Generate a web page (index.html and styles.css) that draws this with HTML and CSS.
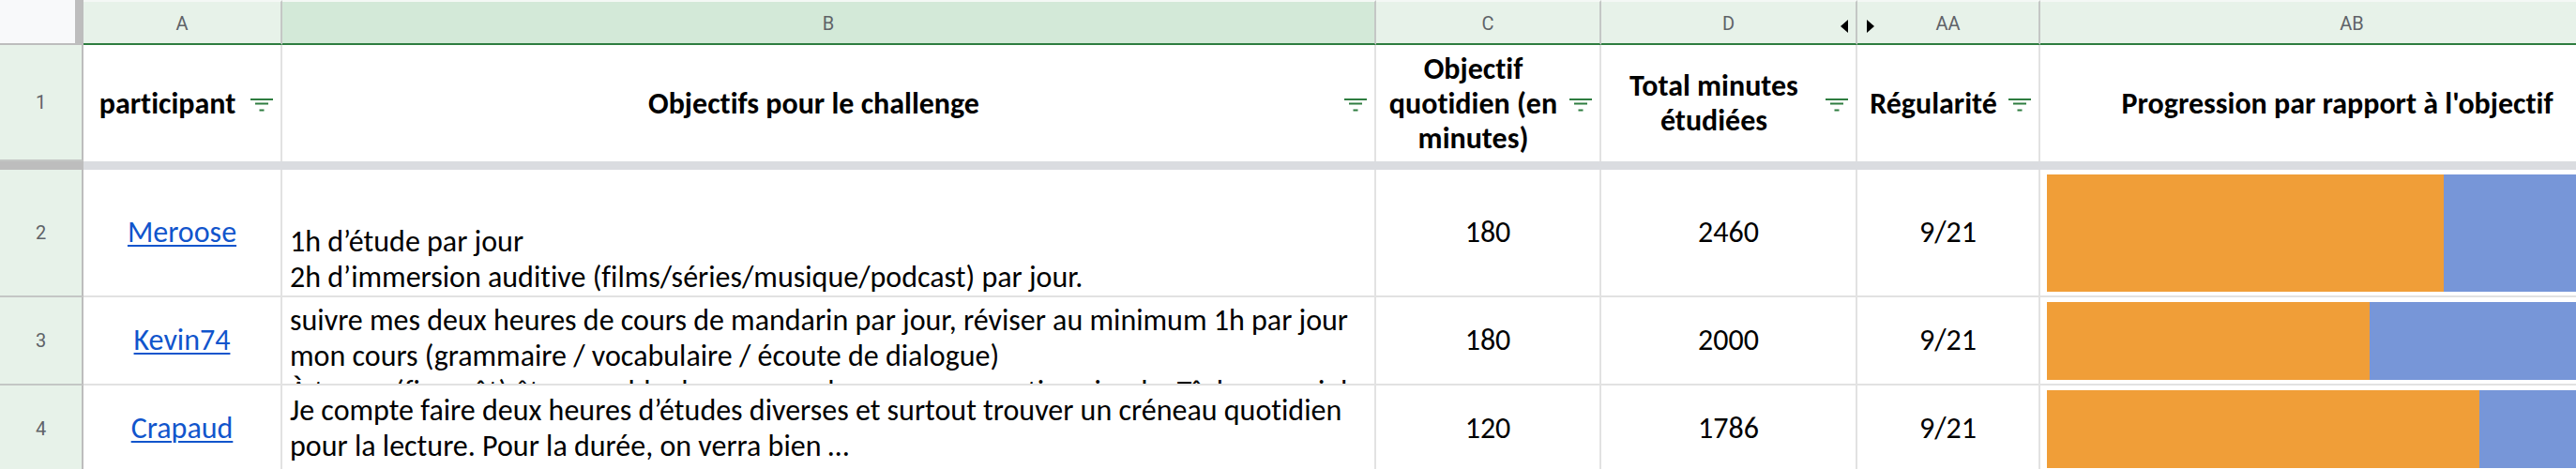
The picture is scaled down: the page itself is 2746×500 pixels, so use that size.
FILE: index.html
```html
<!DOCTYPE html>
<html lang="fr">
<head>
<meta charset="utf-8">
<title>Challenge</title>
<link rel="stylesheet" href="styles.css">
</head>
<body>
<div class="sheet">
  <!-- column header row -->
  <div class="corner"></div>
  <div class="colhead">A</div>
  <div class="colhead sel">B</div>
  <div class="colhead">C</div>
  <div class="colhead has-tri">D<span class="tri tri-left"></span></div>
  <div class="colhead has-tri">AA<span class="tri tri-right"></span></div>
  <div class="colhead">AB</div>

  <!-- row 1 -->
  <div class="rowhead">1</div>
  <div class="hcell"><div class="htext">participant</div><svg class="filter" viewBox="0 0 24 14"><rect x="0" y="0" width="24" height="2"/><rect x="5" y="4.5" width="14" height="2"/><rect x="9.5" y="11.5" width="5" height="2"/></svg></div>
  <div class="hcell"><div class="htext">Objectifs pour le challenge</div><svg class="filter" viewBox="0 0 24 14"><rect x="0" y="0" width="24" height="2"/><rect x="5" y="4.5" width="14" height="2"/><rect x="9.5" y="11.5" width="5" height="2"/></svg></div>
  <div class="hcell"><div class="htext">Objectif quotidien (en minutes)</div><svg class="filter" viewBox="0 0 24 14"><rect x="0" y="0" width="24" height="2"/><rect x="5" y="4.5" width="14" height="2"/><rect x="9.5" y="11.5" width="5" height="2"/></svg></div>
  <div class="hcell"><div class="htext">Total minutes étudiées</div><svg class="filter" viewBox="0 0 24 14"><rect x="0" y="0" width="24" height="2"/><rect x="5" y="4.5" width="14" height="2"/><rect x="9.5" y="11.5" width="5" height="2"/></svg></div>
  <div class="hcell"><div class="htext">Régularité</div><svg class="filter" viewBox="0 0 24 14"><rect x="0" y="0" width="24" height="2"/><rect x="5" y="4.5" width="14" height="2"/><rect x="9.5" y="11.5" width="5" height="2"/></svg></div>
  <div class="hcell"><div class="htext">Progression par rapport à l'objectif</div><svg class="filter" viewBox="0 0 24 14"><rect x="0" y="0" width="24" height="2"/><rect x="5" y="4.5" width="14" height="2"/><rect x="9.5" y="11.5" width="5" height="2"/></svg></div>

  <!-- frozen separator -->
  <div class="sep-head"></div>
  <div class="sep-body"></div>

  <!-- row 2 -->
  <div class="rowhead">2</div>
  <div class="cell center"><a class="link" href="#">Meroose</a></div>
  <div class="cell text bottom">1h d’étude par jour<br>2h d’immersion auditive (films/séries/musique/podcast) par jour.</div>
  <div class="cell center">180</div>
  <div class="cell center">2460</div>
  <div class="cell center">9/21</div>
  <div class="cell spark"><div class="bar"><div class="done" style="width:65.08%"></div><div class="rest"></div></div></div>

  <!-- row 3 -->
  <div class="rowhead">3</div>
  <div class="cell center"><a class="link" href="#">Kevin74</a></div>
  <div class="cell text top">suivre mes deux heures de cours de mandarin par jour, réviser au minimum 1h par jour mon cours (grammaire / vocabulaire / écoute de dialogue)<br>À terme (fin août) être capable de comprendre une conversation simple. Tâcher aussi de lire un peu chaque jour.</div>
  <div class="cell center">180</div>
  <div class="cell center">2000</div>
  <div class="cell center">9/21</div>
  <div class="cell spark"><div class="bar"><div class="done" style="width:52.91%"></div><div class="rest"></div></div></div>

  <!-- row 4 -->
  <div class="rowhead">4</div>
  <div class="cell center"><a class="link" href="#">Crapaud</a></div>
  <div class="cell text middle">Je compte faire deux heures d’études diverses et surtout trouver un créneau quotidien pour la lecture. Pour la durée, on verra bien …</div>
  <div class="cell center">120</div>
  <div class="cell center">1786</div>
  <div class="cell center">9/21</div>
  <div class="cell spark"><div class="bar"><div class="done" style="width:70.87%"></div><div class="rest"></div></div></div>
</div>
</body>
</html>
```

FILE: styles.css
```css
* { box-sizing: border-box; }

html, body {
  margin: 0;
  padding: 0;
  background: #ffffff;
  overflow: hidden;
  width: 2746px;
  height: 500px;
}

.sheet {
  display: grid;
  grid-template-columns: 89px 212px 1166px 240px 273px 195px 666px;
  grid-template-rows: 48px 124px 9px 136px 94px 94px;
  width: 2841px;
  font-family: Carlito, Lato, "Liberation Sans", sans-serif;
  font-size: 32px;
  line-height: 38px;
  font-variant-ligatures: none;
  color: #000;
}

/* header strip */
.corner {
  background: #f8f9fa;
  border-right: 9px solid #bdbdbd;
  border-bottom: 2px solid #bdbdbd;
}

.colhead {
  position: relative;
  display: flex;
  align-items: center;
  justify-content: center;
  background: #e7f2e9;
  border-top: 2px solid #f4f8f5;
  border-right: 2px solid #c4c7c5;
  border-bottom: 2px solid #2e7d40;
  font-family: Roboto, "Noto Sans", sans-serif;
  font-size: 20px;
  color: #5f6368;
  padding-top: 2px;
}

.colhead.sel {
  background: #d3e9d8;
}

.tri {
  position: absolute;
  top: 19px;
  width: 0;
  height: 0;
  border-top: 7px solid transparent;
  border-bottom: 7px solid transparent;
}

.tri-left {
  right: 8px;
  border-right: 8px solid #000;
}

.tri-right {
  left: 10px;
  border-left: 8px solid #000;
}

/* row headers */
.rowhead {
  display: flex;
  align-items: center;
  justify-content: center;
  background: #e7f2e9;
  border-right: 2px solid #bdbdbd;
  border-bottom: 2px solid #c4c7c5;
  font-family: Roboto, "Noto Sans", sans-serif;
  font-size: 20px;
  color: #5f6368;
}

/* header cells of row 1 */
.hcell {
  display: flex;
  align-items: center;
  padding: 0 8px 0 8px;
  border-right: 2px solid #e2e2e2;
  font-weight: bold;
  line-height: 37px;
}

.htext {
  flex: 1;
  text-align: center;
}

.filter {
  width: 24px;
  height: 14px;
  margin-left: 7px;
  margin-top: 4px;
  flex: none;
  fill: #2e7d40;
}

/* frozen separator */
.sep-head {
  background: #bdbdbd;
}

.sep-body {
  grid-column: 2 / -1;
  background: #dadce0;
}

/* data cells */
.cell {
  display: flex;
  border-right: 2px solid #e2e2e2;
  border-bottom: 2px solid #e2e2e2;
  overflow: hidden;
  background: #fff;
}

.cell.center {
  align-items: center;
  justify-content: center;
  text-align: center;
}

.cell.text {
  display: block;
  padding: 0 8px;
}

.cell.bottom {
  display: flex;
  flex-direction: column;
  justify-content: flex-end;
  padding-bottom: 0;
}

.cell.top {
  padding-top: 6px;
}

.cell.middle {
  display: flex;
  align-items: center;
}

.link {
  color: #1155cc;
  text-decoration: underline;
  text-decoration-thickness: 2px;
  text-underline-offset: 3px;
}

.cell.spark {
  padding: 5px 7px 4px 7px;
}

.bar {
  display: flex;
  width: 100%;
  height: 100%;
}

.done {
  background: #f09e38;
  height: 100%;
}

.rest {
  flex: 1;
  background: #7796d8;
  height: 100%;
}
```
